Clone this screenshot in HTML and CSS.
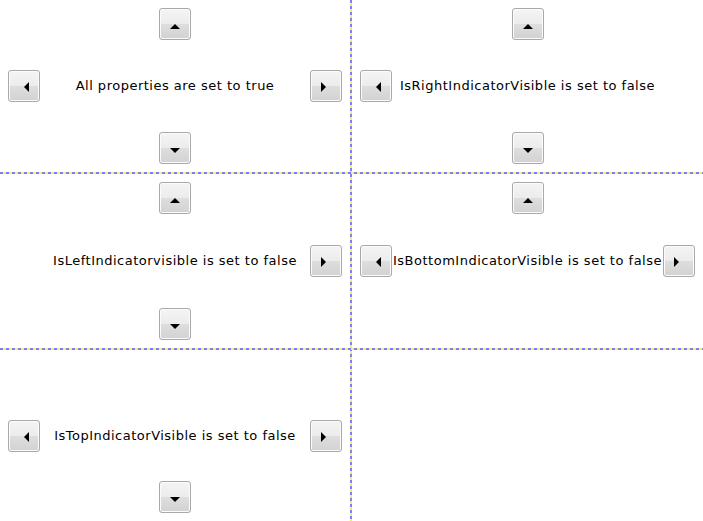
FILE: index.html
```html
<!DOCTYPE html>
<html lang="en">
  <head>
    <meta charset="UTF-8" />
    <title>Indicator Visibility</title>
    <link rel="stylesheet" href="styles.css">
  </head>
  <body>
    <div class="board">
      <div class="cell c1">
        <button class="btn up"><svg viewBox="0 0 30 30"><polygon points="10,20 20,20 15,15" /></svg></button>
        <button class="btn left"><svg viewBox="0 0 30 30"><polygon points="15,16 20,11 20,21" /></svg></button>
        <div class="label">All properties are set to true</div>
        <button class="btn right"><svg viewBox="0 0 30 30"><polygon points="15,16 10,11 10,21" /></svg></button>
        <button class="btn down"><svg viewBox="0 0 30 30"><polygon points="10,15 20,15 15,20" /></svg></button>
      </div>

      <div class="vline"></div>

      <div class="cell c2">
        <button class="btn up"><svg viewBox="0 0 30 30"><polygon points="10,20 20,20 15,15" /></svg></button>
        <button class="btn left"><svg viewBox="0 0 30 30"><polygon points="15,16 20,11 20,21" /></svg></button>
        <div class="label">IsRightIndicatorVisible is set to false</div>
        <button class="btn down"><svg viewBox="0 0 30 30"><polygon points="10,15 20,15 15,20" /></svg></button>
      </div>

      <div class="hline h1"></div>

      <div class="cell c3">
        <button class="btn up"><svg viewBox="0 0 30 30"><polygon points="10,20 20,20 15,15" /></svg></button>
        <div class="label">IsLeftIndicatorvisible is set to false</div>
        <button class="btn right"><svg viewBox="0 0 30 30"><polygon points="15,16 10,11 10,21" /></svg></button>
        <button class="btn down"><svg viewBox="0 0 30 30"><polygon points="10,15 20,15 15,20" /></svg></button>
      </div>

      <div class="cell c4">
        <button class="btn up"><svg viewBox="0 0 30 30"><polygon points="10,20 20,20 15,15" /></svg></button>
        <button class="btn left"><svg viewBox="0 0 30 30"><polygon points="15,16 20,11 20,21" /></svg></button>
        <div class="label">IsBottomIndicatorVisible is set to false</div>
        <button class="btn right"><svg viewBox="0 0 30 30"><polygon points="15,16 10,11 10,21" /></svg></button>
      </div>

      <div class="hline h2"></div>

      <div class="cell c5">
        <button class="btn left"><svg viewBox="0 0 30 30"><polygon points="15,16 20,11 20,21" /></svg></button>
        <div class="label">IsTopIndicatorVisible is set to false</div>
        <button class="btn right"><svg viewBox="0 0 30 30"><polygon points="15,16 10,11 10,21" /></svg></button>
        <button class="btn down"><svg viewBox="0 0 30 30"><polygon points="10,15 20,15 15,20" /></svg></button>
      </div>

      <div class="cell c6"></div>
    </div>
  </body>
</html>
```

FILE: styles.css
```css
html,
body {
  margin: 0;
  padding: 0;
  background-color: white;
}

body {
  font-family: "DejaVu Sans", Verdana, sans-serif;
  font-size: 13px;
  letter-spacing: 0.5px;
  color: black;
}

.board {
  display: grid;
  grid-template-columns: 350px 2px 1fr;
  grid-template-rows: 172px 2px 174px 2px 1fr;
  height: 521px;
  overflow: hidden;
}

.cell {
  display: grid;
  grid-template-columns: 32px 1fr 32px;
  grid-template-rows: 32px 1fr 32px;
  padding: 8px;
  min-width: 0;
}

.c1 { grid-column: 1; grid-row: 1; }
.c2 { grid-column: 3; grid-row: 1; }
.c3 { grid-column: 1; grid-row: 3; }
.c4 { grid-column: 3; grid-row: 3; }
.c5 { grid-column: 1; grid-row: 5; }
.c6 { grid-column: 3; grid-row: 5; }

.vline {
  grid-column: 2;
  grid-row: 1 / -1;
  background: repeating-linear-gradient(
    to bottom,
    #8080f0 0,
    #8080f0 3px,
    #f0f070 3px,
    #f0f070 6px
  );
}

.hline {
  grid-column: 1 / -1;
  background: repeating-linear-gradient(
    to right,
    #8080f0 0,
    #8080f0 3px,
    #f0f070 3px,
    #f0f070 6px
  );
}

.h1 { grid-row: 2; }
.h2 { grid-row: 4; }

.btn {
  width: 32px;
  height: 32px;
  padding: 0;
  margin: 0;
  box-sizing: border-box;
  border: 1px solid #a9a9a9;
  border-radius: 3px;
  background: linear-gradient(
    to bottom,
    #f4f4f4 0%,
    #ececec 50%,
    #dedede 50%,
    #d2d2d2 100%
  );
  box-shadow: inset 0 0 0 1px #fbfbfb;
  display: block;
}

.btn svg {
  display: block;
  width: 30px;
  height: 30px;
}

.btn polygon {
  fill: black;
}

.up {
  grid-column: 2;
  grid-row: 1;
  justify-self: center;
}

.down {
  grid-column: 2;
  grid-row: 3;
  justify-self: center;
}

.left {
  grid-column: 1;
  grid-row: 2;
  align-self: center;
}

.right {
  grid-column: 3;
  grid-row: 2;
  align-self: center;
}

.label {
  grid-column: 2;
  grid-row: 2;
  display: flex;
  align-items: center;
  justify-content: center;
  white-space: nowrap;
  min-width: 0;
  margin-top: -1px;
}
```
